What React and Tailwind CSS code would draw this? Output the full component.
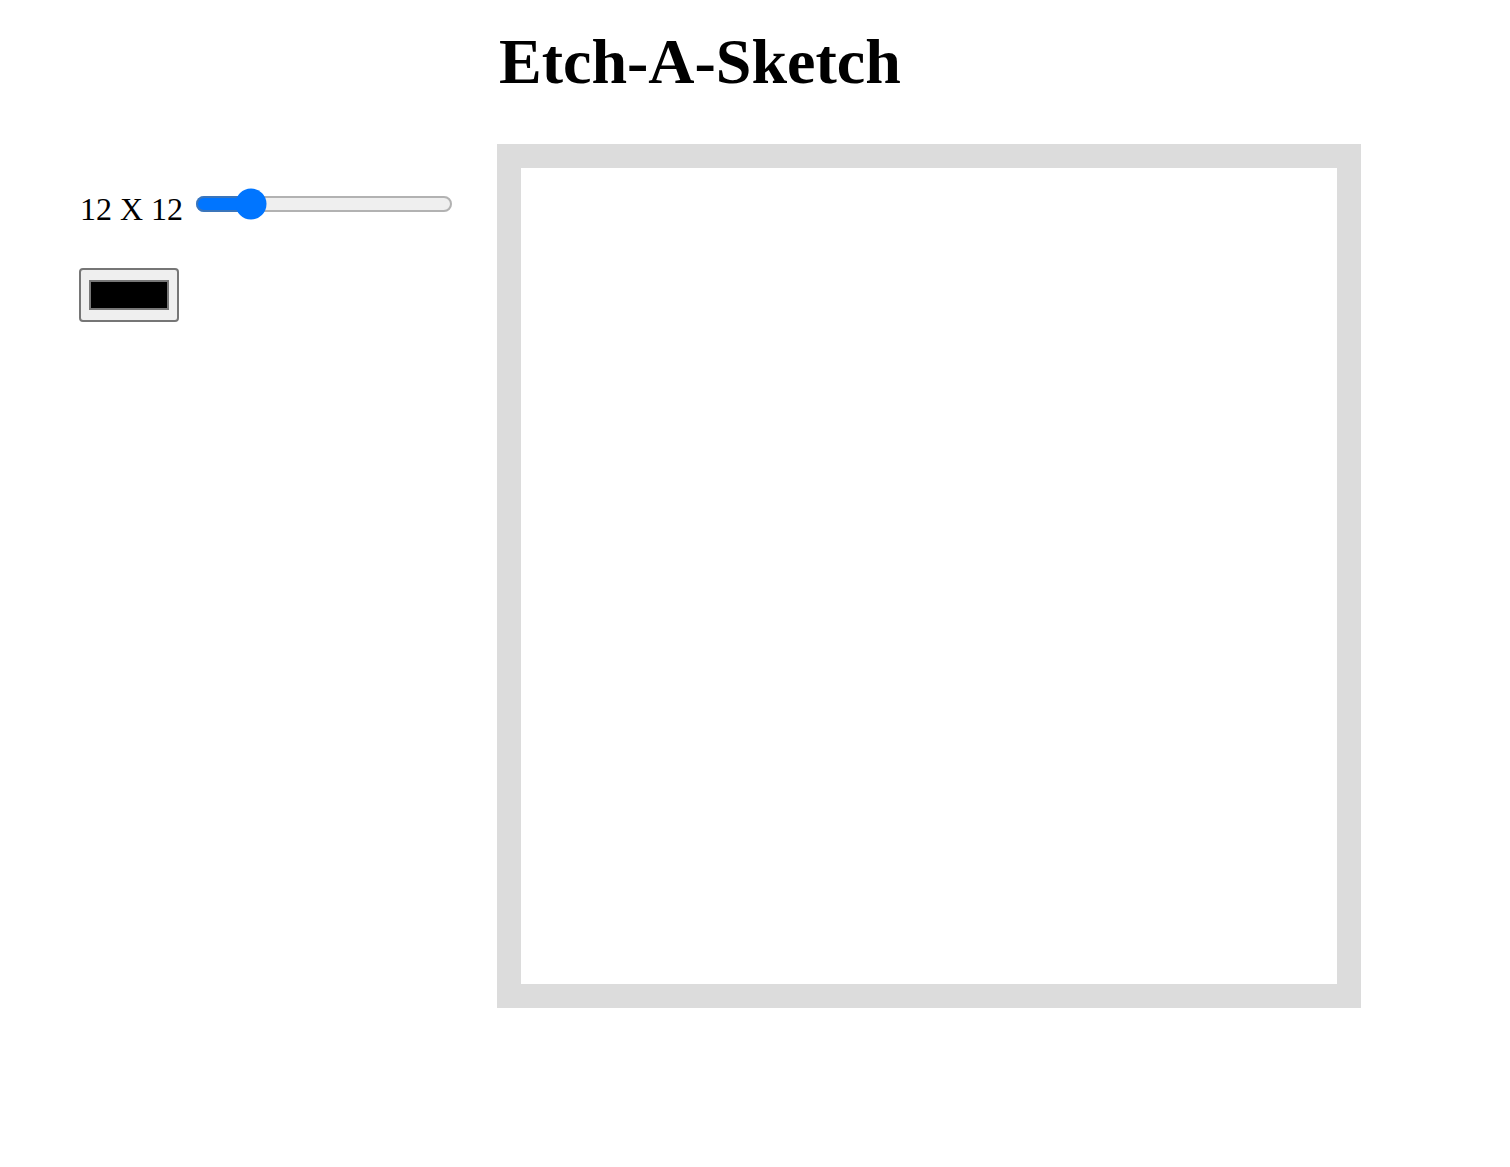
import { useState } from 'react';

export default function App() {
  const [size, setSize] = useState(12);
  const [color, setColor] = useState('#000000');

  return (
    <div className="min-h-screen bg-white text-black font-['Liberation_Serif',serif]">
      <div className="flex pt-[25px]">
        {/* Controls */}
        <aside className="w-[497px] shrink-0 pl-20 pt-[163px]">
          <div className="flex items-start">
            <span className="mt-[3px] text-[32px] leading-[normal]">
              {size} X {size}
            </span>
            <input
              type="range"
              min="1"
              max="64"
              value={size}
              onChange={(e) => setSize(Number(e.target.value))}
              className="ml-[6px] [zoom:2]"
            />
          </div>
          <input
            type="color"
            value={color}
            onChange={(e) => setColor(e.target.value)}
            className="mt-[20px] -ml-[0.5px] block w-[50px] h-[27px] px-[2px] py-[1px] border border-[#767676] rounded-[2px] bg-[#efefef] [zoom:2]"
          />
        </aside>

        {/* Board */}
        <main>
          <h1 className="pl-[2px] text-[64px] font-bold leading-[normal]">Etch-A-Sketch</h1>
          <div className="mt-[45px] w-[864px] h-[864px] border-[24px] border-[#dcdcdc] bg-white" />
        </main>
      </div>
    </div>
  );
}
